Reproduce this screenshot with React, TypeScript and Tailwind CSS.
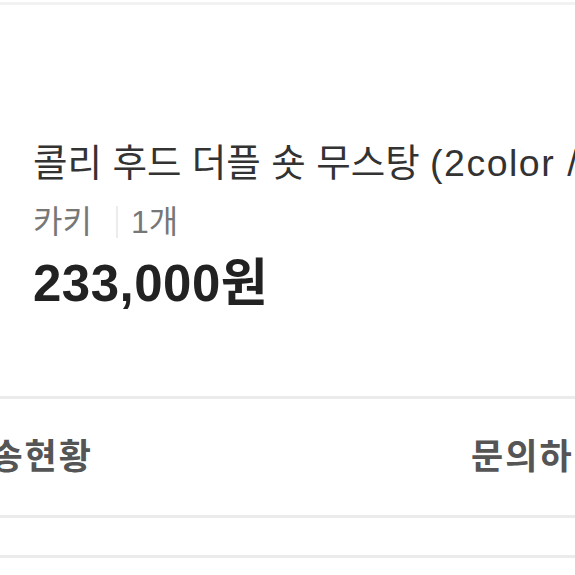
export default function App() {
  const sans = "font-['Liberation_Sans','Noto_Sans_CJK_KR',sans-serif]"
  return (
    <div className={`w-[575px] h-[575px] overflow-hidden bg-white ${sans}`}>
      <div className="h-[3px] mt-[2px] bg-[#f2f2f2]" />

      {/* 상품 정보 */}
      <section className="h-[391px] pl-[33px] pt-[135px] whitespace-nowrap">
        <p className="text-[37.5px] leading-[46px] text-[#333]">
          콜리 후드 더플 숏 무스탕 <span className="tracking-[1.5px]">(2color / 2size)</span>
        </p>
        <div className="mt-[16px] flex items-center text-[32px] leading-[40px] text-[#777]">
          <span>카키</span>
          <span className="ml-[24px] mr-[13px] w-[2px] h-[32px] bg-[#ececec]" />
          <span>1개</span>
        </div>
        <p className="mt-[13px] text-[51px] leading-[58px] font-bold tracking-[0.5px] text-[#222]">233,000원</p>
      </section>

      <div className="h-[3px] bg-[#ebebeb]" />

      {/* 버튼 */}
      <div className="h-[116px] flex items-center text-[35px] leading-[40px] font-bold tracking-[2px] text-[#555] whitespace-nowrap">
        <div className="w-[260px] shrink-0 flex justify-end pr-[167px]">
          <span>배송현황</span>
        </div>
        <div className="w-[2px] h-[48px] bg-[#eeeeee]" />
        <div className="pl-[211px]">
          <span>문의하기</span>
        </div>
      </div>

      <div className="h-[3px] bg-[#ebebeb]" />
      <div className="h-[37px]" />
      <div className="h-[3px] bg-[#ebebeb]" />
    </div>
  )
}
